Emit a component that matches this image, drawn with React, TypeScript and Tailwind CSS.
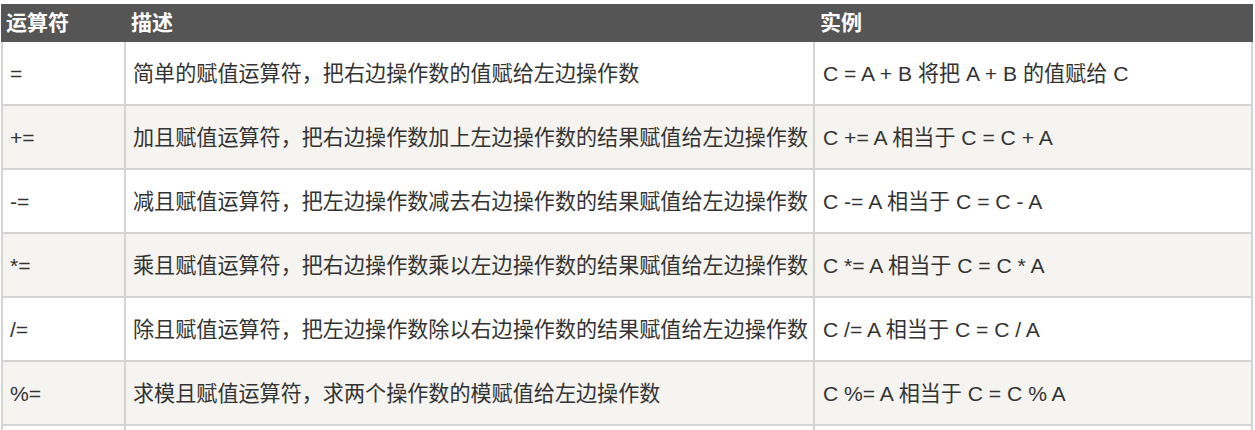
import React from "react";

const rows: [string, string, string][] = [
  ["=", "简单的赋值运算符，把右边操作数的值赋给左边操作数", "C = A + B 将把 A + B 的值赋给 C"],
  ["+=", "加且赋值运算符，把右边操作数加上左边操作数的结果赋值给左边操作数", "C += A 相当于 C = C + A"],
  ["-=", "减且赋值运算符，把左边操作数减去右边操作数的结果赋值给左边操作数", "C -= A 相当于 C = C - A"],
  ["*=", "乘且赋值运算符，把右边操作数乘以左边操作数的结果赋值给左边操作数", "C *= A 相当于 C = C * A"],
  ["/=", "除且赋值运算符，把左边操作数除以右边操作数的结果赋值给左边操作数", "C /= A 相当于 C = C / A"],
  ["%=", "求模且赋值运算符，求两个操作数的模赋值给左边操作数", "C %= A 相当于 C = C % A"],
  ["", "", ""],
];

export default function App() {
  return (
    <div className="w-[1255px] h-[430px] overflow-hidden bg-white pt-1 pl-px text-[#333] font-['Liberation_Sans','Noto_Sans_CJK_SC',sans-serif]">
      <div className="w-[1252px]">
        <div className="grid grid-cols-[125px_689px_438px] h-[38px] bg-[#555] text-white font-bold text-[21px] items-center">
          <div className="pl-[5px]">运算符</div>
          <div className="pl-[5px]">描述</div>
          <div className="pl-[5px]">实例</div>
        </div>
        {rows.map((r, i) => (
          <div
            key={i}
            className={
              "grid grid-cols-[125px_689px_438px] h-[64px] border-b-2 border-[#d4d4d4] text-[21.1px] " +
              (i % 2 === 1 ? "bg-[#f5f4f0]" : "bg-white")
            }
          >
            <div className="border-l-2 border-r-2 border-[#d4d4d4] pl-[7px] flex items-center pt-[2px]">{r[0]}</div>
            <div className="border-r-2 border-[#d4d4d4] pl-[7px] flex items-center whitespace-nowrap pt-[2px]">{r[1]}</div>
            <div className="border-r-2 border-[#d4d4d4] pl-[8px] flex items-center whitespace-nowrap pt-[2px]">{r[2]}</div>
          </div>
        ))}
      </div>
    </div>
  );
}
